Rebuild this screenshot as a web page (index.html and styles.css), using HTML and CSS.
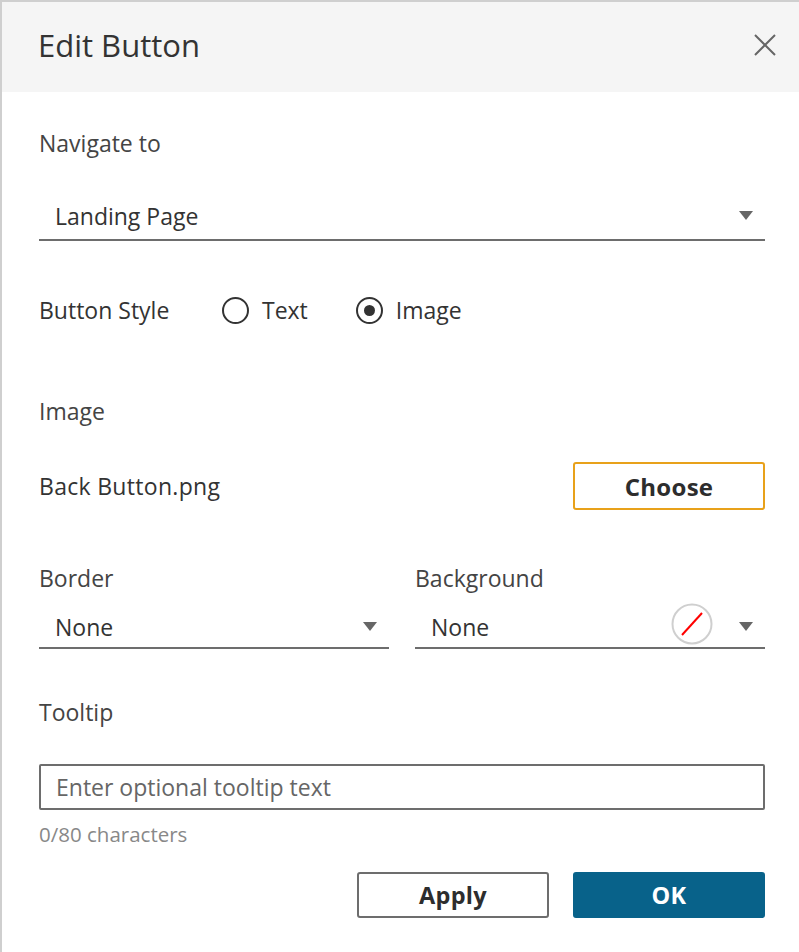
FILE: index.html
```html
<!DOCTYPE html>
<html>
<head>
<meta charset="utf-8">
<link rel="stylesheet" href="styles.css">
</head>
<body>
<div class="dialog">
  <div class="header">
    <h1 class="title">Edit Button</h1>
    <svg class="close" width="22" height="22" viewBox="0 0 22 22"><path d="M1 1L21 21M21 1L1 21" stroke="#666" stroke-width="2" fill="none"/></svg>
  </div>
  <div class="body">
    <div class="label nav-label">Navigate to</div>
    <div class="select full">
      <span class="value">Landing Page</span>
      <span class="caret"></span>
    </div>
    <div class="style-row">
      <span class="style-label">Button Style</span>
      <span class="radio"><span class="circle"></span><span>Text</span></span>
      <span class="radio"><span class="circle checked"></span><span>Image</span></span>
    </div>
    <div class="label image-label">Image</div>
    <div class="file-row">
      <span class="file">Back Button.png</span>
      <button class="btn choose">Choose</button>
    </div>
    <div class="two-col">
      <div class="col">
        <div class="label">Border</div>
        <div class="select">
          <span class="value">None</span>
          <span class="caret"></span>
        </div>
      </div>
      <div class="col">
        <div class="label">Background</div>
        <div class="select">
          <span class="value">None</span>
          <svg class="swatch" width="42" height="42" viewBox="0 0 42 42"><circle cx="21" cy="21" r="19.5" fill="#fff" stroke="#cfcfcf" stroke-width="2"/><path d="M11 32L31 10" stroke="#f00" stroke-width="2"/></svg>
          <span class="caret"></span>
        </div>
      </div>
    </div>
    <div class="label tooltip-label">Tooltip</div>
    <div class="input">Enter optional tooltip text</div>
    <div class="count">0/80 characters</div>
    <div class="actions">
      <button class="btn apply">Apply</button>
      <button class="btn ok">OK</button>
    </div>
  </div>
</div>
</body>
</html>
```
FILE: styles.css
```css
html, body {
  margin: 0;
  padding: 0;
  background: #fff;
}
body {
  font-family: "Open Sans", Lato, sans-serif;
  color: #333;
}
.dialog {
  width: 797px;
  height: 950px;
  border-top: 2px solid #cfcfcf;
  border-left: 2px solid #cfcfcf;
  background: #fff;
}
.header {
  height: 90px;
  background: #f5f5f5;
  display: flex;
  align-items: center;
  justify-content: space-between;
  padding: 0 23px 0 36px;
}
.title {
  margin: 0;
  font-weight: 400;
  font-size: 31px;
  line-height: 40px;
  color: #333;
  position: relative;
  top: -2px;
}
.close {
  position: relative;
  top: -2px;
}
.body {
  padding: 0 34px 0 37px;
}
.label {
  font-size: 23px;
  color: #444;
  line-height: 30px;
  height: 30px;
}
.nav-label {
  padding-top: 36px;
}
.select {
  display: flex;
  align-items: center;
  height: 46px;
  border-bottom: 2px solid #6d6d6d;
  padding-left: 16px;
  padding-right: 12px;
  font-size: 23px;
  color: #333;
}
.select.full {
  margin-top: 35px;
}
.value {
  flex: 1;
}
.caret {
  width: 0;
  height: 0;
  border-left: 7px solid transparent;
  border-right: 7px solid transparent;
  border-top: 9px solid #666;
  margin-top: -2px;
}
.style-row {
  display: flex;
  align-items: center;
  margin-top: 51px;
  font-size: 23px;
  color: #333;
  height: 36px;
}
.style-label {
  width: 183px;
}
.radio {
  display: flex;
  align-items: center;
  gap: 13px;
  margin-right: 48px;
}
.circle {
  width: 23px;
  height: 23px;
  border: 2px solid #333;
  border-radius: 50%;
  display: inline-flex;
  align-items: center;
  justify-content: center;
}
.circle.checked::after {
  content: "";
  width: 11px;
  height: 11px;
  border-radius: 50%;
  background: #333;
}
.image-label {
  margin-top: 68px;
}
.file-row {
  display: flex;
  align-items: center;
  justify-content: space-between;
  margin-top: 36px;
  font-size: 23px;
  color: #333;
  letter-spacing: 0.3px;
}
.btn {
  font-family: "Open Sans", Lato, sans-serif;
  width: 192px;
  height: 48px;
  border-radius: 3px;
  background: #fff;
  font-size: 23.5px;
  font-weight: 700;
  color: #2d2d2d;
  cursor: pointer;
  padding: 0;
  letter-spacing: 0.3px;
}
.choose {
  border: 2px solid #e8a11a;
  font-size: 24px;
}
.two-col {
  display: flex;
  gap: 26px;
  margin-top: 53px;
}
.col {
  flex: 1;
}
.col .select {
  height: 40px;
  margin-top: 14px;
}
.swatch {
  margin-right: 26px;
  margin-top: -6px;
}
.tooltip-label {
  margin-top: 48px;
}
.input {
  margin-top: 37px;
  height: 42px;
  border: 2px solid #6d6d6d;
  border-radius: 2px;
  display: flex;
  align-items: center;
  padding-left: 15px;
  font-size: 23px;
  color: #666;
}
.count {
  margin-top: 12px;
  font-size: 20.5px;
  line-height: 24px;
  color: #888;
}
.actions {
  display: flex;
  justify-content: flex-end;
  gap: 24px;
  margin-top: 26px;
}
.apply {
  height: 46px;
  border: 2px solid #6d6d6d;
}
.ok {
  height: 46px;
  border: 2px solid #08628a;
  background: #08628a;
  color: #fff;
}
```
